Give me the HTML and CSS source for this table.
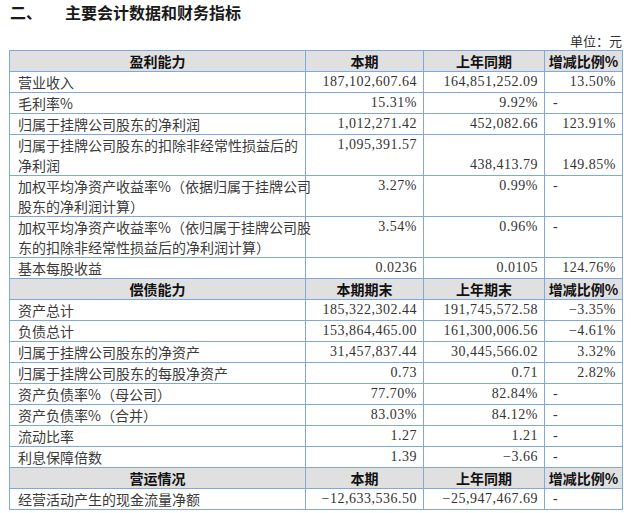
FILE: index.html
```html
<!DOCTYPE html>
<html lang="zh-CN">
<head>
  <meta charset="UTF-8">
  <meta name="viewport" content="width=device-width, initial-scale=1.0">
  <title>主要会计数据和财务指标</title>
  <link rel="stylesheet" href="styles.css">
</head>
<body>
  <div class="page">
    <h2 class="title"><span class="num">二、</span>主要会计数据和财务指标</h2>
    <div class="unit">单位：元</div>

    <table class="fin">
      <colgroup>
        <col class="c-name"><col class="c-cur"><col class="c-prev"><col class="c-chg">
      </colgroup>
      <tr class="head">
        <th>盈利能力</th><th>本期</th><th>上年同期</th><th>增减比例%</th>
      </tr>
      <tr><td>营业收入</td><td class="n">187,102,607.64</td><td class="n">164,851,252.09</td><td class="n">13.50%</td></tr>
      <tr><td>毛利率%</td><td class="n">15.31%</td><td class="n">9.92%</td><td class="d">-</td></tr>
      <tr><td>归属于挂牌公司股东的净利润</td><td class="n">1,012,271.42</td><td class="n">452,082.66</td><td class="n">123.91%</td></tr>
      <tr class="tall"><td>归属于挂牌公司股东的扣除非经常性损益后的<br>净利润</td><td class="n top">1,095,391.57</td><td class="n bottom">438,413.79</td><td class="n bottom">149.85%</td></tr>
      <tr class="tall"><td>加权平均净资产收益率%（依据归属于挂牌公司<br>股东的净利润计算）</td><td class="n top">3.27%</td><td class="n top">0.99%</td><td class="d top">-</td></tr>
      <tr class="tall"><td>加权平均净资产收益率%（依归属于挂牌公司股<br>东的扣除非经常性损益后的净利润计算）</td><td class="n top">3.54%</td><td class="n top">0.96%</td><td class="d top">-</td></tr>
      <tr><td>基本每股收益</td><td class="n">0.0236</td><td class="n">0.0105</td><td class="n">124.76%</td></tr>

      <tr class="head">
        <th>偿债能力</th><th>本期期末</th><th>上年期末</th><th>增减比例%</th>
      </tr>
      <tr><td>资产总计</td><td class="n">185,322,302.44</td><td class="n">191,745,572.58</td><td class="n">−3.35%</td></tr>
      <tr><td>负债总计</td><td class="n">153,864,465.00</td><td class="n">161,300,006.56</td><td class="n">−4.61%</td></tr>
      <tr><td>归属于挂牌公司股东的净资产</td><td class="n">31,457,837.44</td><td class="n">30,445,566.02</td><td class="n">3.32%</td></tr>
      <tr><td>归属于挂牌公司股东的每股净资产</td><td class="n">0.73</td><td class="n">0.71</td><td class="n">2.82%</td></tr>
      <tr><td>资产负债率%（母公司）</td><td class="n">77.70%</td><td class="n">82.84%</td><td class="d">-</td></tr>
      <tr><td>资产负债率%（合并）</td><td class="n">83.03%</td><td class="n">84.12%</td><td class="d">-</td></tr>
      <tr><td>流动比率</td><td class="n">1.27</td><td class="n">1.21</td><td class="d">-</td></tr>
      <tr><td>利息保障倍数</td><td class="n">1.39</td><td class="n">−3.66</td><td class="d">-</td></tr>

      <tr class="head">
        <th>营运情况</th><th>本期</th><th>上年同期</th><th>增减比例%</th>
      </tr>
      <tr><td>经营活动产生的现金流量净额</td><td class="n">−12,633,536.50</td><td class="n">−25,947,467.69</td><td class="d">-</td></tr>
    </table>
  </div>
</body>
</html>
```

FILE: styles.css
```css
body {
  margin: 0;
  background: #ffffff;
  color: #333333;
  font-family: "Liberation Serif", "Noto Sans CJK SC", serif;
}
.page {
  padding: 2px 9px 0;
}
.title {
  margin: 0;
  font-family: "Noto Sans CJK SC", sans-serif;
  font-size: 16px;
  font-weight: bold;
  line-height: 20px;
  color: #1a1a1a;
  padding-left: 1px;
}
.title .num {
  display: inline-block;
  width: 55px;
}
.unit {
  margin-top: 10px;
  height: 18px;
  line-height: 18px;
  text-align: right;
  font-family: "Noto Sans CJK SC", sans-serif;
  font-size: 13px;
  color: #333333;
}
.fin {
  width: 613px;
  table-layout: fixed;
  border-collapse: collapse;
  font-size: 14px;
}
.c-name { width: 296px; }
.c-cur { width: 118px; }
.c-prev { width: 121px; }
.c-chg { width: 78px; }
.fin td,
.fin th {
  border: 1px solid #7fa9dc;
  padding: 0 6px 0 8px;
  line-height: 20px;
  height: 20px;
  vertical-align: middle;
  white-space: nowrap;
}
.fin td:first-child {
  font-family: "Noto Sans CJK SC", sans-serif;
  color: #3a3a3a;
}
.head th {
  background: #e0e0e0;
  font-family: "Noto Sans CJK SC", sans-serif;
  font-weight: bold;
  color: #111111;
  text-align: center;
  padding: 0;
}
.fin td.n {
  text-align: right;
  letter-spacing: 0.5px;
}
.fin td.d {
  text-align: left;
}
.fin td.top {
  vertical-align: top;
}
.fin td.bottom {
  vertical-align: bottom;
}
```
